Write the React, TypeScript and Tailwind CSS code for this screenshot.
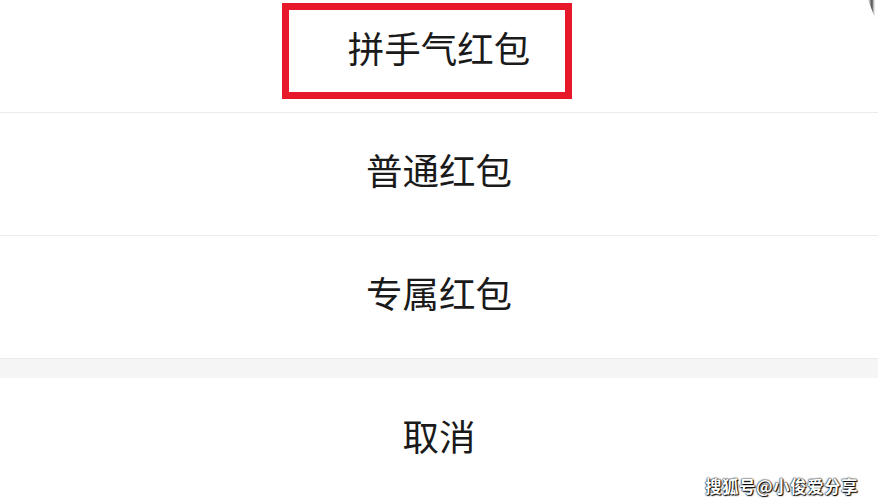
const rows = ["普通红包", "专属红包"]

const cjk = "font-['Noto_Sans_CJK_SC','Noto_Sans',sans-serif]"

export default function App() {
  return (
    <div className={`relative h-[500px] w-[878px] overflow-hidden bg-white ${cjk}`}>
      <div className="flex flex-col">
        {/* first option, marked with the red box */}
        <div className="relative flex h-[113px] items-center justify-center border-b border-[#ebebeb] pb-[15px]">
          <span className="text-[36.5px] leading-none text-[#1a1a1a]">拼手气红包</span>
          <div className="absolute left-[282px] top-[3px] h-[96px] w-[290px] border-[7px] border-[#e8182b]" />
        </div>

        {rows.map((label) => (
          <div key={label} className="flex h-[123px] items-center justify-center border-b border-[#ebebeb] pb-[7px]">
            <span className="text-[36.5px] leading-none text-[#1a1a1a]">{label}</span>
          </div>
        ))}

        <div className="h-[19px] bg-[#f5f5f5]" />

        <div className="flex h-[122px] items-center justify-center pb-[6px]">
          <span className="text-[36.5px] leading-none text-[#1a1a1a]">取消</span>
        </div>
      </div>

      {/* scan shadow in the corner */}
      <svg className="absolute right-0 top-0" width="10" height="20" viewBox="0 0 10 20">
        <defs>
          <linearGradient id="corner" x1="0" y1="0" x2="1" y2="0">
            <stop offset="0" stopColor="#333" stopOpacity="0" />
            <stop offset="0.5" stopColor="#333" stopOpacity="0.9" />
            <stop offset="1" stopColor="#fff" stopOpacity="0" />
          </linearGradient>
        </defs>
        <polygon points="0,0 8,0 7,18" fill="url(#corner)" />
      </svg>

      {/* watermark */}
      <div className="absolute bottom-[6px] right-[20px] text-[16.5px] font-bold leading-none tracking-[0.5px] text-white [text-shadow:0_0_2px_#000,0_0_1px_#000,1px_1px_1px_#000]">
        搜狐号@小俊爱分享
      </div>
    </div>
  )
}
